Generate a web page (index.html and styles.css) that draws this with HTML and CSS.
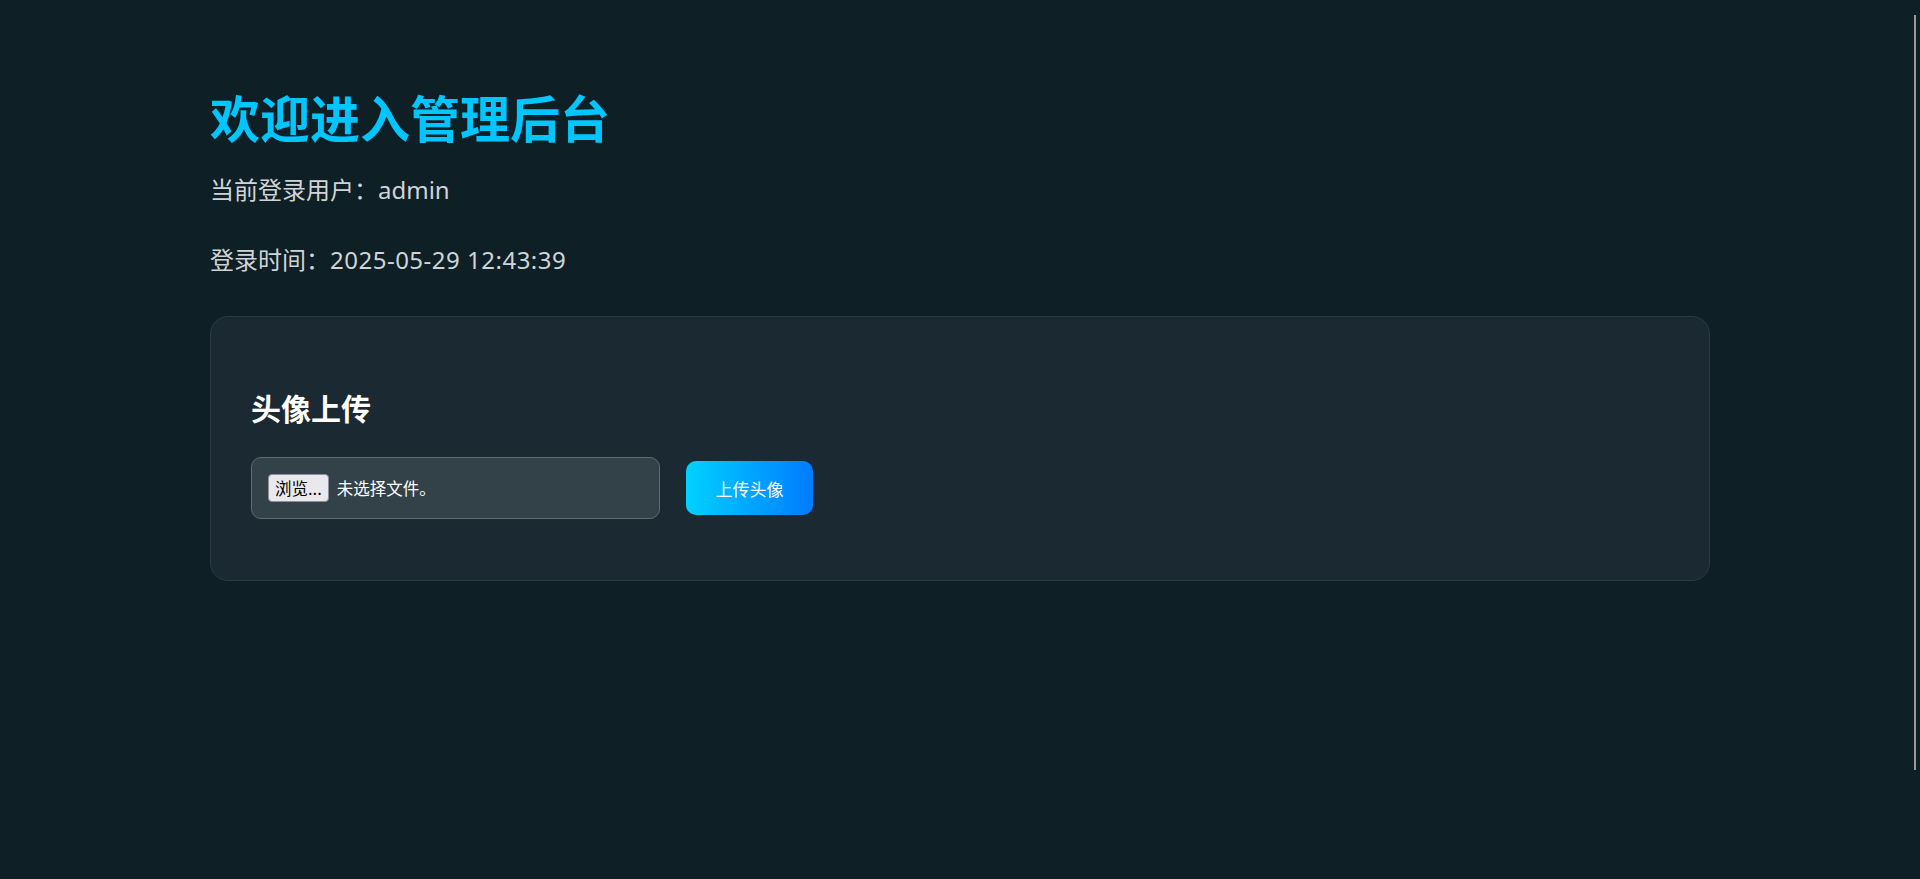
FILE: index.html
```html
<!DOCTYPE html>
<html lang="zh-CN">
<head>
<meta charset="utf-8">
<title>管理后台</title>
<link rel="stylesheet" href="styles.css">
</head>
<body>
<div class="scroll-thumb"></div>
<main class="container">
  <h1 class="title">欢迎进入管理后台</h1>
  <p class="info info-user">当前登录用户：admin</p>
  <p class="info info-time">登录时间：<span class="stamp">2025-05-29 12:43:39</span></p>
  <section class="card">
    <h3 class="card-title">头像上传</h3>
    <form class="upload-form">
      <label class="file-box">
        <input class="file-native" type="file" name="avatar">
        <span class="file-btn">浏览...</span>
        <span class="file-text">未选择文件。</span>
      </label>
      <button class="upload-btn" type="button">上传头像</button>
    </form>
  </section>
</main>
</body>
</html>
```

FILE: styles.css
```css
html, body {
  margin: 0;
  padding: 0;
}
body {
  background: #0f1f26;
  font-family: "Noto Sans", "Noto Sans CJK SC", sans-serif;
  color: #d2d6d8;
  min-height: 879px;
}
.scroll-thumb {
  position: fixed;
  top: 15px;
  left: 1914px;
  width: 2px;
  height: 755px;
  background: #9a9a9a;
}
.container {
  width: 1500px;
  margin: 0 auto;
  padding-top: 86px;
}
.title {
  margin: 0;
  font-family: "Noto Sans CJK SC", sans-serif;
  font-size: 50px;
  line-height: 60px;
  font-weight: 700;
  color: #00c6ff;
}
.info {
  margin: 0;
  font-size: 24px;
  line-height: 32px;
  color: #d0d4d6;
}
.info-user {
  margin-top: 28px;
}
.info-time {
  margin-top: 38px;
}
.stamp {
  letter-spacing: 0.5px;
}
.card {
  margin-top: 40px;
  background: #1b2a32;
  border: 1px solid #2c3b43;
  border-radius: 18px;
  padding: 40px;
}
.card-title {
  margin: 30px 0;
  font-family: "Noto Sans CJK SC", sans-serif;
  font-size: 30px;
  line-height: 40px;
  font-weight: 700;
  color: #ffffff;
}
.upload-form {
  display: flex;
  align-items: center;
  gap: 26px;
  margin-bottom: 21px;
}
.file-box {
  box-sizing: border-box;
  display: flex;
  align-items: center;
  width: 409px;
  height: 62px;
  padding: 0 16px;
  background: #334148;
  border: 1px solid #5f6b71;
  border-radius: 10px;
  font-family: "Noto Sans CJK SC", sans-serif;
  font-size: 16.5px;
}
.file-native {
  display: none;
}
.file-btn {
  box-sizing: border-box;
  height: 28px;
  line-height: 26px;
  padding: 0 6px;
  background: #e9e9ed;
  border: 1px solid #8f8f9d;
  border-radius: 4px;
  color: #000;
}
.file-text {
  margin-left: 8px;
  color: #ffffff;
}
.upload-btn {
  box-sizing: border-box;
  height: 54px;
  width: 127px;
  border: none;
  border-radius: 10px;
  background: linear-gradient(to right, #00d2ff, #007bff);
  color: #ffffff;
  font-family: "Noto Sans CJK SC", sans-serif;
  font-size: 17px;
  cursor: pointer;
}
```
